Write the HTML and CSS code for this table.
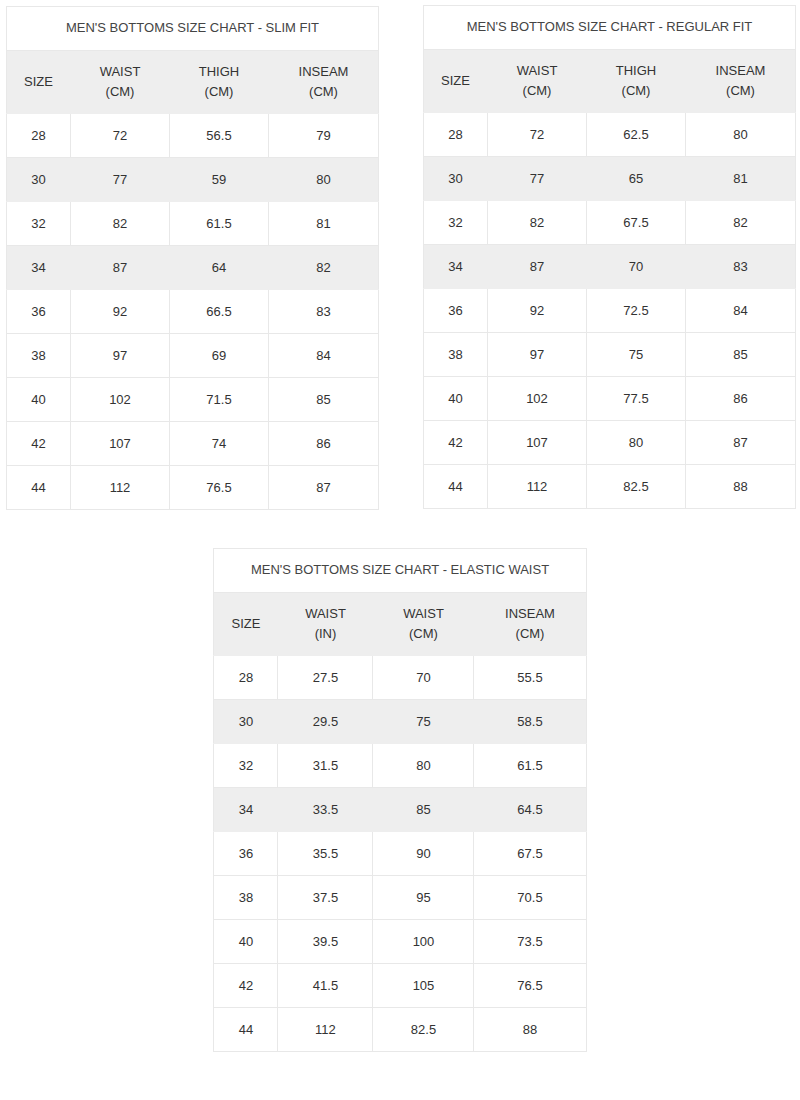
FILE: index.html
```html
<!DOCTYPE html>
<html>
<head>
<meta charset="utf-8">
<link rel="stylesheet" href="styles.css">
</head>
<body>
<div class="page">
  <div class="top-row">
    <table class="chart">
      <colgroup><col class="c1"><col class="c2"><col class="c3"><col class="c4"></colgroup>
      <tr class="title"><td colspan="4">MEN'S BOTTOMS SIZE CHART - SLIM FIT</td></tr>
      <tr class="head"><td>SIZE</td><td>WAIST<br>(CM)</td><td>THIGH<br>(CM)</td><td>INSEAM<br>(CM)</td></tr>
      <tr><td>28</td><td>72</td><td>56.5</td><td>79</td></tr>
      <tr class="alt"><td>30</td><td>77</td><td>59</td><td>80</td></tr>
      <tr><td>32</td><td>82</td><td>61.5</td><td>81</td></tr>
      <tr class="alt"><td>34</td><td>87</td><td>64</td><td>82</td></tr>
      <tr><td>36</td><td>92</td><td>66.5</td><td>83</td></tr>
      <tr><td>38</td><td>97</td><td>69</td><td>84</td></tr>
      <tr><td>40</td><td>102</td><td>71.5</td><td>85</td></tr>
      <tr><td>42</td><td>107</td><td>74</td><td>86</td></tr>
      <tr><td>44</td><td>112</td><td>76.5</td><td>87</td></tr>
    </table>
    <table class="chart chart-right">
      <colgroup><col class="c1"><col class="c2"><col class="c3"><col class="c4"></colgroup>
      <tr class="title"><td colspan="4">MEN'S BOTTOMS SIZE CHART - REGULAR FIT</td></tr>
      <tr class="head"><td>SIZE</td><td>WAIST<br>(CM)</td><td>THIGH<br>(CM)</td><td>INSEAM<br>(CM)</td></tr>
      <tr><td>28</td><td>72</td><td>62.5</td><td>80</td></tr>
      <tr class="alt"><td>30</td><td>77</td><td>65</td><td>81</td></tr>
      <tr><td>32</td><td>82</td><td>67.5</td><td>82</td></tr>
      <tr class="alt"><td>34</td><td>87</td><td>70</td><td>83</td></tr>
      <tr><td>36</td><td>92</td><td>72.5</td><td>84</td></tr>
      <tr><td>38</td><td>97</td><td>75</td><td>85</td></tr>
      <tr><td>40</td><td>102</td><td>77.5</td><td>86</td></tr>
      <tr><td>42</td><td>107</td><td>80</td><td>87</td></tr>
      <tr><td>44</td><td>112</td><td>82.5</td><td>88</td></tr>
    </table>
  </div>
  <div class="bottom-row">
    <table class="chart elastic">
      <colgroup><col class="e1"><col class="e2"><col class="e3"><col class="e4"></colgroup>
      <tr class="title"><td colspan="4">MEN'S BOTTOMS SIZE CHART - ELASTIC WAIST</td></tr>
      <tr class="head"><td>SIZE</td><td>WAIST<br>(IN)</td><td>WAIST<br>(CM)</td><td>INSEAM<br>(CM)</td></tr>
      <tr><td>28</td><td>27.5</td><td>70</td><td>55.5</td></tr>
      <tr class="alt"><td>30</td><td>29.5</td><td>75</td><td>58.5</td></tr>
      <tr><td>32</td><td>31.5</td><td>80</td><td>61.5</td></tr>
      <tr class="alt"><td>34</td><td>33.5</td><td>85</td><td>64.5</td></tr>
      <tr><td>36</td><td>35.5</td><td>90</td><td>67.5</td></tr>
      <tr><td>38</td><td>37.5</td><td>95</td><td>70.5</td></tr>
      <tr><td>40</td><td>39.5</td><td>100</td><td>73.5</td></tr>
      <tr><td>42</td><td>41.5</td><td>105</td><td>76.5</td></tr>
      <tr><td>44</td><td>112</td><td>82.5</td><td>88</td></tr>
    </table>
  </div>
</div>
</body>
</html>
```
FILE: styles.css
```css
html, body {
  margin: 0;
  padding: 0;
  background: #fff;
}
body {
  font-family: "Liberation Sans", Arial, sans-serif;
  font-size: 13px;
  color: #333;
}
.page {
  width: 800px;
  height: 1100px;
  padding-top: 6px;
  box-sizing: border-box;
}
.top-row {
  display: flex;
  gap: 44px;
  padding-left: 6px;
  align-items: flex-start;
}
.chart-right {
  margin-top: -1px;
}
.bottom-row {
  display: flex;
  justify-content: center;
  padding-top: 38px;
  padding-left: 27px;
  padding-right: 27px;
}
.chart {
  width: 372px;
  border-collapse: collapse;
  table-layout: fixed;
}
.chart td {
  border: 1px solid #e8e8e8;
  text-align: center;
  vertical-align: middle;
  padding: 0;
  line-height: 20px;
  height: 43px;
}
.chart .c1 { width: 64px; }
.chart .c2 { width: 99px; }
.chart .c3 { width: 99px; }
.chart .c4 { width: 110px; }
.chart .e1 { width: 64px; }
.chart .e2 { width: 95px; }
.chart .e3 { width: 101px; }
.chart .e4 { width: 112px; }
.chart .title td {
  color: #444;
  height: 41px;
  padding-bottom: 2px;
}
.chart .head td {
  background: #eee;
  border-color: #eee;
  height: 62px;
}
.chart .head td:first-child { border-left-color: #e8e8e8; }
.chart .head td:last-child { border-right-color: #e8e8e8; }
.chart .alt td {
  background: #eee;
  border-color: #eee;
}
.chart .alt td:first-child { border-left-color: #e8e8e8; }
.chart .alt td:last-child { border-right-color: #e8e8e8; }
```
